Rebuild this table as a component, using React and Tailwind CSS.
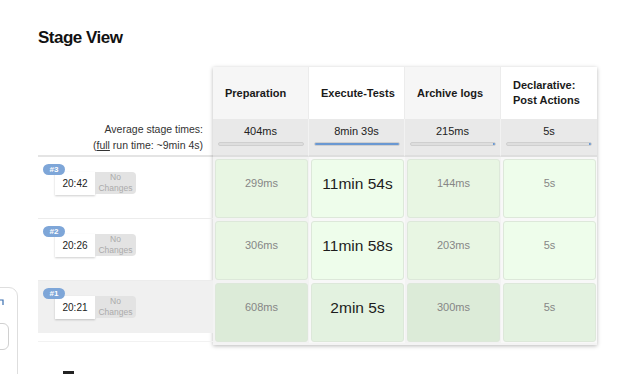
import React from "react";

const stages = ["Preparation", "Execute-Tests", "Archive logs", "Declarative: Post Actions"];
const avgs = [
  { t: "404ms", bar: "none" },
  { t: "8min 39s", bar: "full" },
  { t: "215ms", bar: "tip" },
  { t: "5s", bar: "tip" },
];
const builds = [
  { n: "#3", time: "20:42", cells: ["299ms", "11min 54s", "144ms", "5s"], dark: false },
  { n: "#2", time: "20:26", cells: ["306ms", "11min 58s", "203ms", "5s"], dark: false },
  { n: "#1", time: "20:21", cells: ["608ms", "2min 5s", "300ms", "5s"], dark: true },
];

function Cell({ text, col, dark }) {
  const big = col === 1;
  const bg = dark
    ? col % 2 === 0
      ? "bg-[#dcebd8]"
      : "bg-[#e3f2e0]"
    : col % 2 === 0
    ? "bg-[#e8f6e3]"
    : "bg-[#eefdeb]";
  return (
    <div className="h-[62px] pt-[2px] pb-[1px] pl-[2px] pr-[1px]">
      <div
        className={`h-full w-full rounded-[3px] border border-[#dde8da] ${bg} flex items-center justify-center pb-[10px] ${
          big ? "text-[15.5px] text-[#1d1d1d]" : "text-[11px] text-[#868686]"
        }`}
      >
        {text}
      </div>
    </div>
  );
}

export default function App() {
  return (
    <div className="relative w-[636px] h-[374px] overflow-hidden bg-white font-['Liberation_Sans',Arial,sans-serif] text-[#222]">
      <div className="pl-[38px] pt-[28px] text-[17px] leading-[20px] font-bold tracking-[-0.5px] text-[#111]">
        Stage View
      </div>

      <div className="mt-[19px] ml-[38px] flex">
        {/* left column */}
        <div className="w-[175px] flex flex-col">
          <div className="h-[52px]" />
          <div className="h-[38px] border-b-2 border-[#e4e4e4] flex flex-col items-end justify-center pr-[10px] text-[10.5px] leading-[16px] text-[#333]">
            <div>Average stage times:</div>
            <div>
              (<span className="underline">full</span> run time: ~9min 4s)
            </div>
          </div>
          {builds.map((b, i) => (
            <div
              key={b.n}
              className={`relative h-[62px] ${i < 2 ? "border-b border-[#ececec]" : ""}`}
            >
              <div className={`${b.dark ? "bg-[#f0f0f0] h-[52px]" : "h-[61px]"} pl-[17px] pt-[15px] flex`}>
                <div className="w-[40px] h-[23px] bg-white shadow-[0_1px_2px_rgba(0,0,0,0.2)] flex items-center justify-center text-[10px] text-[#222]">
                  {b.time}
                </div>
                <div className="w-[41px] h-[22px] bg-[#e3e3e3] rounded-r-[4px] flex flex-col items-center justify-center text-[8.5px] leading-[11px] text-[#ababab]">
                  <span>No</span>
                  <span>Changes</span>
                </div>
              </div>
              <div className="absolute left-[5px] top-[7px] w-[22px] h-[11px] rounded-full bg-[#7ea6d8] text-white text-[8px] leading-[11px] font-bold text-center">
                {b.n}
              </div>
              {b.dark && <div className="absolute left-0 right-0 bottom-[1px] h-px bg-[#f2f2f2]" />}
            </div>
          ))}
        </div>

        {/* stage table */}
        <div className="w-[384px] shadow-[0_1px_4px_rgba(0,0,0,0.28)] grid grid-cols-4 bg-[#f4f4f4] pb-[2px]">
          {stages.map((s, c) => (
            <div key={s} className={`flex flex-col ${c % 2 === 0 ? "bg-[#f3f3f3]" : "bg-[#f8f8f8]"}`}>
              <div
                className={`h-[52px] flex items-center pl-[12px] pr-[6px] text-[11px] leading-[15px] font-bold text-[#1a1a1a] ${
                  c % 2 === 0 ? "bg-[#f6f6f6]" : "bg-white"
                } ${c < 3 ? "border-r border-[#ececec]" : ""}`}
              >
                {c === 3 ? (
                  <span>
                    Declarative:
                    <br />
                    Post Actions
                  </span>
                ) : (
                  s
                )}
              </div>
              <div className={`h-[38px] bg-[#e9e9e9] flex flex-col items-center pt-[6px] border-b-2 border-[#dedede] ${c < 3 ? "border-r border-r-[#f2f2f2]" : ""}`}>
                <div className="text-[11px] leading-[13px] text-[#222]">{avgs[c].t}</div>
                <div className="mt-[4px] w-[86px] h-[4px] rounded-[2px] border border-[#cfcfcf] bg-[#dedede] relative overflow-hidden">
                  {avgs[c].bar === "full" && <div className="absolute inset-0 bg-[#6a98d2]" />}
                  {avgs[c].bar === "tip" && <div className="absolute right-0 top-0 bottom-0 w-[2px] bg-[#6a98d2]" />}
                </div>
              </div>
              {builds.map((b) => (
                <Cell key={b.n} text={b.cells[c]} col={c} dark={b.dark} />
              ))}
            </div>
          ))}
        </div>
      </div>

      {/* partial sidebar artifact at left edge */}
      <div className="absolute left-[-20px] top-[287px] w-[38px] h-[100px] rounded-tr-[9px] border border-[#dedede] bg-white" />
      <div className="absolute left-[-14px] top-[323px] w-[23px] h-[27px] rounded-[6px] border border-[#d0d0d0]" />
      <svg className="absolute left-0 top-[299px]" width="4" height="7" viewBox="0 0 4 7">
        <path d="M0 1 H3 V6" fill="none" stroke="#3a6fb0" strokeWidth="1.2" />
      </svg>
      <div className="absolute left-[63px] top-[371px] w-[11px] h-[3px] bg-[#222]" />
    </div>
  );
}
